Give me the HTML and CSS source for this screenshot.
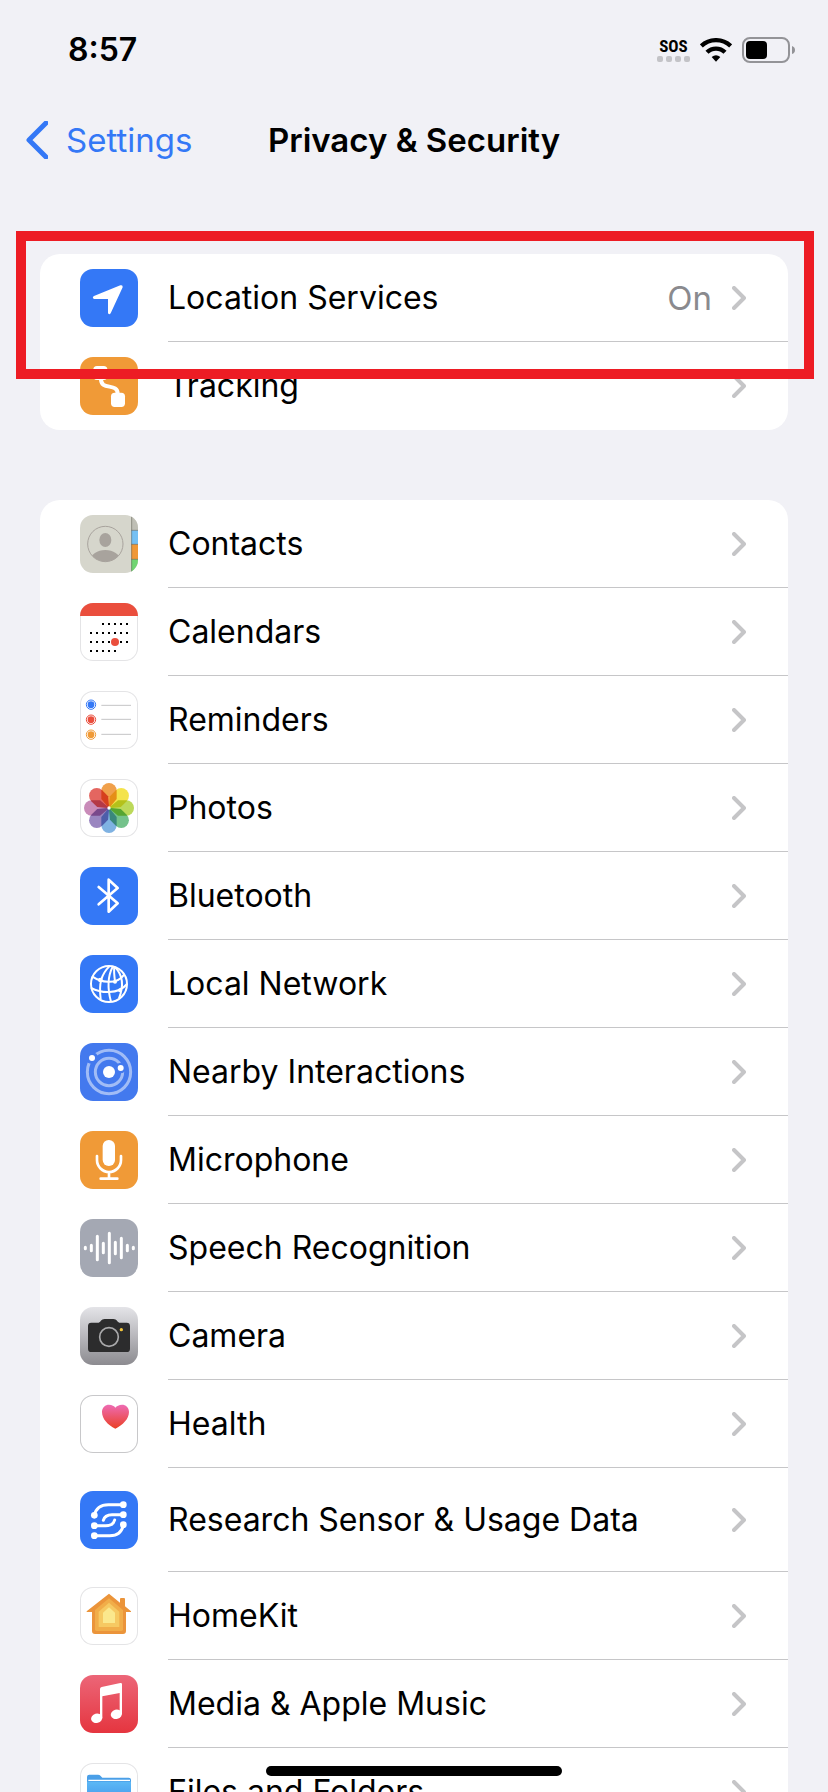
FILE: index.html
```html
<!DOCTYPE html>
<html lang="en">
<head>
    <meta charset="utf-8">
    <meta name="viewport" content="width=device-width, initial-scale=1">
    <title>Privacy &amp; Security</title>
    <link rel="stylesheet" href="styles.css">
</head>
<body>
    <!-- Shared shapes -->
    <svg class="defs" aria-hidden="true">
        <symbol id="chevron" viewBox="0 0 14 24">
            <path d="M2 2l10 10L2 22" fill="none" stroke="#c5c5c7" stroke-width="4" stroke-linecap="round" stroke-linejoin="round"/>
        </symbol>
        <path id="petal" d="M64 35a23 23 0 0 1 46 0V60L87 88L64 60Z"/>
    </svg>

    <div class="status-bar">
        <span class="time">8:57</span>
        <div class="indicators">
            <div class="sos">
                <span class="sos-text">SOS</span>
                <div class="sos-dots"><i></i><i></i><i></i><i></i></div>
            </div>
            <svg class="wifi" viewBox="0 0 96 72" aria-label="Wi-Fi">
                <path d="M4 24A64 64 0 0 1 92 24" fill="none" stroke="#000" stroke-width="13"/>
                <path d="M21 43A38 38 0 0 1 75 43" fill="none" stroke="#000" stroke-width="13"/>
                <path d="M48 71L35 57Q48 46 61 57Z"/>
            </svg>
            <svg class="battery" viewBox="0 0 54 26" aria-label="Battery">
                <rect x="1" y="1" width="46" height="24" rx="7" fill="none" stroke="#939397" stroke-width="2"/>
                <rect x="4" y="4" width="21" height="18" rx="4"/>
                <path d="M50 9Q53 10 53 13T50 17Z" fill="#939397"/>
            </svg>
        </div>
    </div>

    <header class="nav">
        <a class="back" href="#settings">
            <svg viewBox="0 0 22 38" aria-hidden="true"><path d="M20 2L3 19l17 17" fill="none" stroke="#3478f6" stroke-width="5" stroke-linecap="round" stroke-linejoin="round"/></svg>
            Settings
        </a>
        <h1>Privacy &amp; Security</h1>
    </header>

    <main>
        <section class="group">
            <a class="row" href="#location">
                <svg class="icon blue" viewBox="0 0 174 174"><path d="M121 49L42 81Q35 86 42 90H84V132Q87 139 92 133L128 55Q129 47 121 49Z" fill="#fff"/></svg>
                <span class="row-body"><span class="label">Location Services</span><span class="value">On</span><svg class="chevron"><use href="#chevron"/></svg></span>
            </a>
            <a class="row" href="#tracking">
                <svg class="icon orange" viewBox="0 0 174 174">
                    <rect x="40" y="27" width="42" height="42" rx="11" fill="#fff"/>
                    <rect x="93" y="107" width="42" height="43" rx="11" fill="#fff"/>
                    <path d="M63 66C62 102 113 76 113 110" fill="none" stroke="#fff" stroke-width="12"/>
                </svg>
                <span class="row-body"><span class="label">Tracking</span><svg class="chevron"><use href="#chevron"/></svg></span>
            </a>
            <div class="highlight"></div>
        </section>

        <section class="group">
            <a class="row" href="#contacts">
                <svg class="icon" viewBox="0 0 174 174">
                    <clipPath id="face"><circle cx="76" cy="87" r="53"/></clipPath>
                    <rect width="174" height="174" fill="#d6d6cc"/>
                    <rect x="154" width="20" height="46" fill="#bfbfb5"/>
                    <rect x="154" y="46" width="20" height="42" fill="#75c0f3"/>
                    <rect x="154" y="88" width="20" height="45" fill="#ef9837"/>
                    <rect x="154" y="133" width="20" height="41" fill="#70d572"/>
                    <path d="M155 0V174M154 46H174M154 88H174M154 133H174" stroke="#55554d" stroke-opacity=".5" stroke-width="3"/>
                    <circle cx="76" cy="87" r="53" fill="none" stroke="#a8a39d" stroke-width="3"/>
                    <ellipse cx="76" cy="75" rx="18" ry="21" fill="#a8a39d"/>
                    <ellipse cx="76" cy="136" rx="44" ry="31" fill="#a8a39d" clip-path="url(#face)"/>
                </svg>
                <span class="row-body"><span class="label">Contacts</span><svg class="chevron"><use href="#chevron"/></svg></span>
            </a>
            <a class="row" href="#calendars">
                <svg class="icon outlined" viewBox="0 0 174 174">
                    <g stroke="#000" stroke-width="6" stroke-dasharray="6 12">
                        <path d="M66 63H144M30 90H144M30 117H144M30 144H108"/>
                    </g>
                    <circle cx="105" cy="117" r="12" fill="#ea4e3d"/>
                    <rect width="174" height="39" fill="#ea4e3d"/>
                </svg>
                <span class="row-body"><span class="label">Calendars</span><svg class="chevron"><use href="#chevron"/></svg></span>
            </a>
            <a class="row" href="#reminders">
                <svg class="icon outlined" viewBox="0 0 174 174">
                    <g fill="none" stroke-width="3">
                        <circle cx="33" cy="41" r="14" stroke="#3478f6"/>
                        <circle cx="33" cy="86" r="14" stroke="#ea4e3d"/>
                        <circle cx="33" cy="131" r="14" stroke="#f09a37"/>
                        <path d="M64 43H153M64 85H153M64 130H153" stroke="#c4c4c6"/>
                    </g>
                    <circle cx="33" cy="41" r="10" fill="#3478f6"/>
                    <circle cx="33" cy="86" r="10" fill="#ea4e3d"/>
                    <circle cx="33" cy="131" r="10" fill="#f09a37"/>
                </svg>
                <span class="row-body"><span class="label">Reminders</span><svg class="chevron"><use href="#chevron"/></svg></span>
            </a>
            <a class="row" href="#photos">
                <svg class="icon outlined petals" viewBox="0 0 174 174">
                    <use href="#petal" fill="#f0a04b"/>
                    <use href="#petal" fill="#f4e34b" transform="rotate(45 87 87)"/>
                    <use href="#petal" fill="#bcd95a" transform="rotate(90 87 87)"/>
                    <use href="#petal" fill="#74c28b" transform="rotate(135 87 87)"/>
                    <use href="#petal" fill="#7fb2e2" transform="rotate(180 87 87)"/>
                    <use href="#petal" fill="#9a86c0" transform="rotate(225 87 87)"/>
                    <use href="#petal" fill="#c98bb9" transform="rotate(270 87 87)"/>
                    <use href="#petal" fill="#e46660" transform="rotate(315 87 87)"/>
                    <circle cx="87" cy="87" r="5" fill="#fff"/>
                </svg>
                <span class="row-body"><span class="label">Photos</span><svg class="chevron"><use href="#chevron"/></svg></span>
            </a>
            <a class="row" href="#bluetooth">
                <svg class="icon blue" viewBox="0 0 174 174"><path d="M56 60L113 109L86 134V38L113 63L56 112" fill="none" stroke="#fff" stroke-width="8" stroke-linecap="round" stroke-linejoin="round"/></svg>
                <span class="row-body"><span class="label">Bluetooth</span><svg class="chevron"><use href="#chevron"/></svg></span>
            </a>
            <a class="row" href="#network">
                <svg class="icon blue" viewBox="0 0 174 174">
                    <g fill="none" stroke="#fff" stroke-width="6">
                        <circle cx="87" cy="87" r="54"/>
                        <path d="M88 34C64 58 56 84 62 132M98 35C84 62 82 100 93 140M103 35C101 48 103 64 105 80M105 36C130 62 132 92 117 130"/>
                        <path d="M36 64C60 80 108 94 133 58M33 99C62 114 114 120 141 87"/>
                    </g>
                    <circle cx="61" cy="75" r="7" fill="#fff"/>
                    <circle cx="105" cy="80" r="6" fill="#fff"/>
                    <circle cx="120" cy="106" r="6" fill="#fff"/>
                </svg>
                <span class="row-body"><span class="label">Local Network</span><svg class="chevron"><use href="#chevron"/></svg></span>
            </a>
            <a class="row" href="#nearby">
                <svg class="icon nearby" viewBox="0 0 174 174">
                    <g fill="none" stroke="#a1bcf6" stroke-width="9">
                        <circle cx="87" cy="87" r="65"/>
                        <circle cx="87" cy="87" r="41"/>
                    </g>
                    <circle cx="36" cy="45" r="18" fill="#4379ee"/>
                    <circle cx="122" cy="75" r="16" fill="#4379ee"/>
                    <g fill="#fff">
                        <circle cx="36" cy="45" r="9"/>
                        <circle cx="122" cy="75" r="9"/>
                        <circle cx="87" cy="87" r="18"/>
                    </g>
                </svg>
                <span class="row-body"><span class="label">Nearby Interactions</span><svg class="chevron"><use href="#chevron"/></svg></span>
            </a>
            <a class="row" href="#microphone">
                <svg class="icon orange" viewBox="0 0 174 174">
                    <rect x="68" y="27" width="37" height="78" rx="18" fill="#fff"/>
                    <path d="M51 75V87a36 36 0 0 0 72 0V75M87 123V143M62 143H112" fill="none" stroke="#fff" stroke-width="8" stroke-linecap="round"/>
                </svg>
                <span class="row-body"><span class="label">Microphone</span><svg class="chevron"><use href="#chevron"/></svg></span>
            </a>
            <a class="row" href="#speech">
                <svg class="icon gray" viewBox="0 0 174 174"><path d="M16 85V89M34 79V95M52 52V122M70 73V101M88 43V131M106 70V104M124 58V116M142 79V95M160 85V89" stroke="#fff" stroke-width="9" stroke-linecap="round"/></svg>
                <span class="row-body"><span class="label">Speech Recognition</span><svg class="chevron"><use href="#chevron"/></svg></span>
            </a>
            <a class="row" href="#camera">
                <svg class="icon camera" viewBox="0 0 174 174">
                    <path d="M34 47H56C63 45 63 36 74 36H100C111 36 111 45 118 47H140Q150 47 150 57V125Q150 135 140 135H34Q24 135 24 125V57Q24 47 34 47Z" fill="#2c2c2d"/>
                    <circle cx="87" cy="90" r="28" fill="none" stroke="#a9a9ab" stroke-width="5"/>
                    <circle cx="124" cy="68" r="5" fill="#f3c63d"/>
                </svg>
                <span class="row-body"><span class="label">Camera</span><svg class="chevron"><use href="#chevron"/></svg></span>
            </a>
            <a class="row" href="#health">
                <svg class="icon outlined dark" viewBox="0 0 174 174">
                    <linearGradient id="heart" x2="0" y2="1"><stop stop-color="#ee6bb4"/><stop offset="1" stop-color="#ea4025"/></linearGradient>
                    <path d="M106 101C84 90 66 72 66 51C66 37 76 29 87 29C96 29 103 33 106 38C110 33 117 29 126 29C137 29 147 37 147 51C147 72 128 90 106 101Z" fill="url(#heart)"/>
                </svg>
                <span class="row-body"><span class="label">Health</span><svg class="chevron"><use href="#chevron"/></svg></span>
            </a>
            <a class="row tall" href="#research">
                <svg class="icon blue" viewBox="0 0 174 174">
                    <path d="M43 73C48 50 62 41 85 41H130M130 71H96C80 71 73 76 70 88M43 104H77C94 104 101 99 104 87M130 101C126 124 112 134 89 134H43" fill="none" stroke="#fff" stroke-width="9" stroke-linecap="round"/>
                    <g fill="#fff">
                        <circle cx="130" cy="41" r="10"/><circle cx="130" cy="71" r="10"/><circle cx="130" cy="101" r="10"/>
                        <circle cx="43" cy="73" r="10"/><circle cx="43" cy="104" r="10"/><circle cx="43" cy="134" r="10"/>
                    </g>
                </svg>
                <span class="row-body"><span class="label">Research Sensor &amp; Usage Data</span><svg class="chevron"><use href="#chevron"/></svg></span>
            </a>
            <a class="row" href="#homekit">
                <svg class="icon outlined" viewBox="0 0 174 174">
                    <path d="M87 20L120 47V36Q120 33 123 33H132Q135 33 135 36V58L153 73V75H138V132Q138 141 129 141H45Q36 141 36 132V75H20V73Z" fill="#eb943a"/>
                    <path d="M87 34L129 69V127Q129 132 124 132H50Q45 132 45 127V69Z" fill="#f1ad49"/>
                    <path d="M87 47L118 74V120H56V74Z" fill="#f6c962"/>
                    <path d="M87 61L105 77V108H69V77Z" fill="#fbe88d"/>
                </svg>
                <span class="row-body"><span class="label">HomeKit</span><svg class="chevron"><use href="#chevron"/></svg></span>
            </a>
            <a class="row" href="#media">
                <svg class="icon music" viewBox="0 0 174 174">
                    <g fill="#fff">
                        <path d="M60 42Q60 37 65 36L121 24Q126 23 126 28V118H119V54L67 64V130H60Z"/>
                        <ellipse cx="50" cy="130" rx="17" ry="14" transform="rotate(-15 50 130)"/>
                        <ellipse cx="109" cy="118" rx="17" ry="14" transform="rotate(-15 109 118)"/>
                    </g>
                </svg>
                <span class="row-body"><span class="label">Media &amp; Apple Music</span><svg class="chevron"><use href="#chevron"/></svg></span>
            </a>
            <a class="row" href="#files">
                <svg class="icon outlined" viewBox="0 0 174 174">
                    <linearGradient id="folder" x2="0" y2="1"><stop stop-color="#5cb8f5"/><stop offset="1" stop-color="#3a8ae8"/></linearGradient>
                    <path d="M21 42Q21 35 28 35H54Q59 35 62 39L67 44H146Q153 44 153 51V70H21Z" fill="#4a9fe8"/>
                    <path d="M27 54V52H148V54" fill="none" stroke="#fff" stroke-width="4"/>
                    <path d="M21 56H153V130Q153 138 145 138H29Q21 138 21 130Z" fill="url(#folder)"/>
                </svg>
                <span class="row-body"><span class="label">Files and Folders</span><svg class="chevron"><use href="#chevron"/></svg></span>
            </a>
        </section>
    </main>

    <div class="home-indicator"></div>
</body>
</html>
```
FILE: styles.css
```css
* {
    box-sizing: border-box;
}
body {
    margin: 0;
    height: 100vh;
    overflow: hidden;
    display: flex;
    flex-direction: column;
    background-color: #f1f1f6;
    color: #000;
    font-family: Inter, Roboto, sans-serif;
    font-size: 32px;
    line-height: 40px;
}
a {
    color: inherit;
    text-decoration: none;
}
svg {
    display: block;
    flex-shrink: 0;
}
.defs {
    position: absolute;
    width: 0;
    height: 0;
}

/* Status bar */
.status-bar {
    flex-shrink: 0;
    height: 100px;
    padding: 0 32px 0 68px;
    display: flex;
    justify-content: space-between;
    align-items: center;
}
.time {
    font-weight: 600;
}
.indicators {
    display: flex;
    align-items: center;
    gap: 10px;
}
.sos {
    display: flex;
    flex-direction: column;
    align-items: center;
    gap: 2px;
}
.sos-text {
    font-family: "Liberation Sans Narrow", "Roboto Condensed", Roboto, sans-serif;
    font-size: 17px;
    font-weight: 700;
    line-height: 16px;
}
.sos-dots {
    display: flex;
    gap: 3px;
}
.sos-dots i {
    width: 6px;
    height: 6px;
    border-radius: 2px;
    background-color: #c3c3c7;
}
.wifi {
    width: 32px;
    height: 24px;
}
.battery {
    width: 54px;
    height: 26px;
}

/* Navigation */
.nav {
    flex-shrink: 0;
    height: 80px;
    padding: 0 26px;
    display: grid;
    grid-template-columns: 1fr auto 1fr;
    align-items: center;
    font-size: 33px;
}
.nav h1 {
    margin: 0;
    font-size: 33px;
    font-weight: 600;
}
.back {
    display: flex;
    align-items: center;
    gap: 18px;
    color: #3478f6;
}
.back svg {
    width: 22px;
    height: 38px;
}

/* Lists */
main {
    flex: 1;
    min-height: 0;
    overflow: hidden;
    padding: 74px 40px 0;
}
.group {
    position: relative;
    margin-bottom: 70px;
    background-color: #fff;
    border-radius: 20px;
}
.row {
    display: flex;
    align-items: center;
    gap: 30px;
    height: 88px;
    padding-left: 40px;
}
.row.tall {
    height: 104px;
}
.row-body {
    flex: 1;
    align-self: stretch;
    display: flex;
    align-items: center;
    gap: 20px;
    padding-right: 42px;
    border-bottom: 1px solid #c6c6c8;
}
.row:last-of-type .row-body {
    border-bottom: 0;
}
.label {
    flex: 1;
}
.value {
    color: #8a8a8e;
    font-size: 33px;
}
.chevron {
    width: 14px;
    height: 24px;
}

/* App icons */
.icon {
    width: 58px;
    height: 58px;
    border-radius: 13px;
}
.blue {
    background-color: #3478f6;
}
.orange {
    background-color: #f09a37;
}
.gray {
    background-color: #a4a8b3;
}
.nearby {
    background-color: #4379ee;
}
.camera {
    background: linear-gradient(#e4e4e8, #8c8b90);
}
.music {
    background: linear-gradient(#ec6678, #e5353f);
}
.outlined {
    background-color: #fff;
    box-shadow: inset 0 0 0 1px #e4e4e6;
}
.outlined.dark {
    box-shadow: inset 0 0 0 1px #c8c8ca;
}
.petals {
    isolation: isolate;
}
.petals use {
    mix-blend-mode: multiply;
}

/* Frame drawn over the first row */
.highlight {
    position: absolute;
    top: -23px;
    left: -24px;
    right: -26px;
    height: 148px;
    border: 10px solid #ed1c24;
}

.home-indicator {
    position: fixed;
    bottom: 16px;
    left: 50%;
    width: 296px;
    height: 10px;
    margin-left: -148px;
    border-radius: 5px;
    background-color: #000;
}
```
